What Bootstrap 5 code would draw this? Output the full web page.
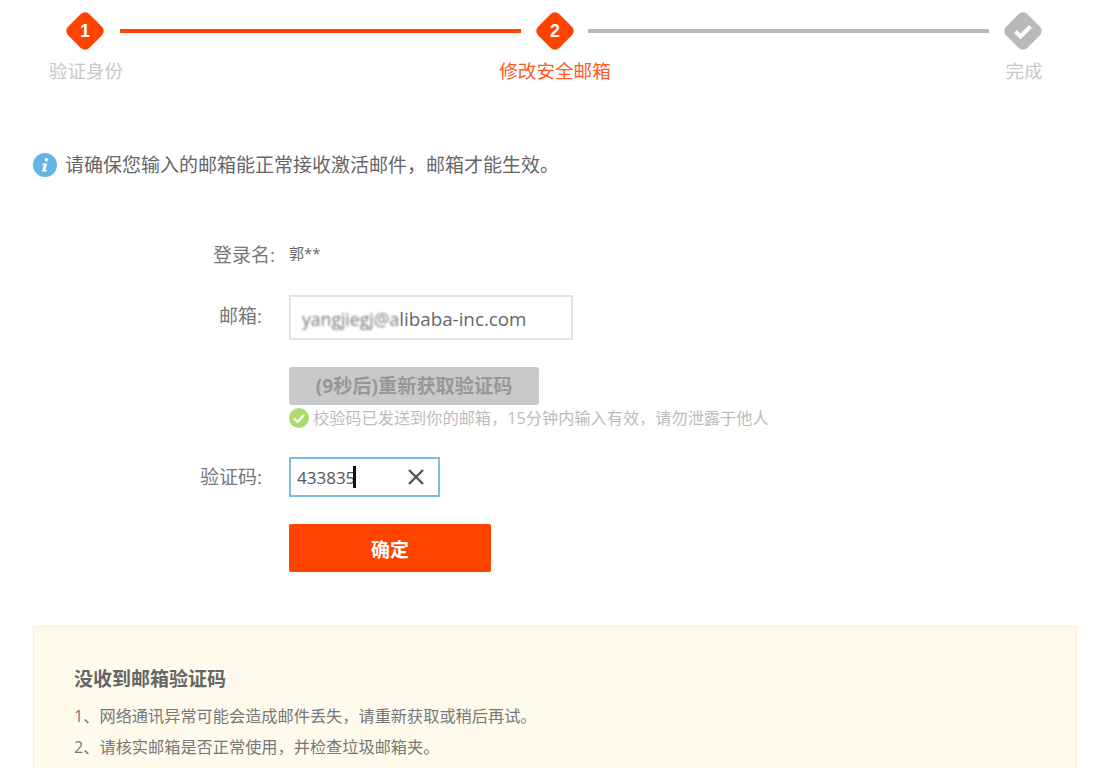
<!DOCTYPE html>
<html lang="zh-CN">
<head>
<meta charset="utf-8">
<title>修改安全邮箱</title>
<link rel="stylesheet" href="https://cdn.jsdelivr.net/npm/bootstrap@5.3.0/dist/css/bootstrap.min.css">
<style>
html,body{height:768px;overflow:hidden}
body{font-family:"Open Sans","Noto Sans CJK SC",sans-serif;color:#666;background:#fff}
.step-track{padding:10px 53px 0 65px;height:51px}
.step-icon{width:40px;height:40px;flex:none;display:block}
.step-icon text{font:700 18px "Liberation Sans","Noto Sans CJK SC",sans-serif;fill:#fff}
.step-line{height:4px;background:#ff4400;flex:none}
.step-line-one{width:401px;margin:0 14px 0 15px}
.step-line-two{width:401px;margin:0 14px 0 13px;background:#b9b9b9}
.step-labels{padding:7px 12px 0 26px;font-size:18.6px;line-height:26px;color:#c8c8c8}
.step-label{width:120px;text-align:center;white-space:nowrap}
.step-now{color:#ff5a1f}
.notice{margin:68px 0 0 33px;height:26px;font-size:19px;line-height:26px;color:#666;white-space:nowrap}
.notice svg{width:24px;height:24px;flex:none;margin-right:8px}
.form-zone{margin-top:64px}
.form-line{display:flex}
.form-name{width:262px;text-align:right;font-size:19px;line-height:26px;color:#777;flex:none;white-space:nowrap}
.form-value{margin-left:27px}
.name-line{height:26px}
.name-label{width:275px}
.name-val{margin-left:14px;font-size:15px;line-height:22px;color:#666}
.mail-line{margin-top:27px;height:45px;align-items:center}
.mail-name{margin-bottom:3px}
.mail-box{width:284px;height:45px;border:2px solid #e2e2e2;padding:4px 0 0 11px;font-size:18.8px;line-height:37px;color:#666;white-space:nowrap}
.mail-blur{filter:blur(1.1px);color:#777;font-size:17.6px}
.code-btn.btn{display:block;margin:27px 0 0 289px;width:250px;height:38px;background:#c8c9ca;border:0;border-radius:3px;color:#979797;font-weight:700;font-size:19.2px;line-height:38px;padding:0;opacity:1}
.hint{margin:0 0 0 289px;height:26px;font-size:16.2px;line-height:26px;color:#bcbcbc;white-space:nowrap}
.hint svg{width:20px;height:20px;flex:none;margin:3px 4px 0 0}
.code-line{margin-top:26px;height:40px;align-items:center}
.code-box{position:relative;width:151px;height:40px}
.code-box .form-control{height:40px;border:2px solid #7bbbe6;border-radius:0;padding:0 0 0 6px;font-size:17px;color:#555;box-shadow:none;background:#fff}
.caret-bar{position:absolute;left:64px;top:9px;width:3px;height:22px;background:#111}
.clear-icon{position:absolute;left:118px;top:11px;width:18px;height:18px}
.ok-btn.btn{display:block;margin:27px 0 0 289px;width:202px;height:48px;background:#ff4400;border:0;border-radius:2px;color:#fff;font-weight:700;font-size:19px;padding:5px 0 0}
.tips{margin:54px 19px 0 33px;height:142px;background:#fffbec;border:1px solid #f8efd2;border-bottom:0;padding:38px 0 0 40px}
.tips-title{font-size:19px;line-height:28px;font-weight:700;color:#666;margin:0 0 8px}
.tips-row{font-size:16.2px;line-height:31px;color:#777;margin:0;white-space:nowrap}
</style>
</head>
<body>
<div class="step-track d-flex align-items-center">
  <svg class="step-icon" viewBox="0 0 40 40"><rect x="5" y="5" width="30" height="30" rx="6" transform="rotate(45 20 20)" fill="#ff4400"/><text x="20" y="26" text-anchor="middle">1</text></svg>
  <div class="step-line step-line-one"></div>
  <svg class="step-icon" viewBox="0 0 40 40"><rect x="5" y="5" width="30" height="30" rx="6" transform="rotate(45 20 20)" fill="#ff4400"/><text x="20" y="26" text-anchor="middle">2</text></svg>
  <div class="step-line step-line-two"></div>
  <svg class="step-icon" viewBox="0 0 40 40"><rect x="5" y="5" width="30" height="30" rx="6" transform="rotate(45 20 20)" fill="#b9b9b9"/><path d="M12.5 20.5l5 5 10-10" fill="none" stroke="#fff" stroke-width="4"/></svg>
</div>
<div class="step-labels d-flex justify-content-between">
  <div class="step-label">验证身份</div>
  <div class="step-label step-now">修改安全邮箱</div>
  <div class="step-label">完成</div>
</div>

<div class="notice d-flex align-items-center">
  <svg viewBox="0 0 24 24"><circle cx="12" cy="12" r="12" fill="#62b5e5"/><circle cx="13.4" cy="6.8" r="1.8" fill="#fff"/><path d="M9.6 10.4h4.6l-1.8 6.6h1.6l-.4 1.6H9l1.8-6.6H9.2z" fill="#fff"/></svg>
  <span>请确保您输入的邮箱能正常接收激活邮件，邮箱才能生效。</span>
</div>

<div class="form-zone">
  <div class="form-line name-line">
    <div class="form-name name-label">登录名:</div>
    <div class="form-value name-val">郭**</div>
  </div>
  <div class="form-line mail-line">
    <div class="form-name mail-name">邮箱:</div>
    <div class="form-value mail-box"><span class="mail-blur">yangjiegj@a</span>libaba-inc.com</div>
  </div>
  <button class="btn code-btn" type="button">(9秒后)重新获取验证码</button>
  <div class="hint d-flex">
    <svg viewBox="0 0 20 20"><circle cx="10" cy="10" r="10" fill="#a9dc6c"/><path d="M5 10.5l3.6 3.4L15 7" fill="none" stroke="#fff" stroke-width="2.4"/></svg>
    <span>校验码已发送到你的邮箱，15分钟内输入有效，请勿泄露于他人</span>
  </div>
  <div class="form-line code-line">
    <div class="form-name">验证码:</div>
    <div class="form-value code-box">
      <input class="form-control" type="text" value="433835" aria-label="验证码">
      <span class="caret-bar"></span>
      <svg class="clear-icon" viewBox="0 0 18 18"><path d="M2 2l14 14M16 2L2 16" stroke="#555" stroke-width="2.4" fill="none"/></svg>
    </div>
  </div>
  <button class="btn ok-btn" type="button">确定</button>
</div>

<div class="tips">
  <h5 class="tips-title">没收到邮箱验证码</h5>
  <p class="tips-row">1、网络通讯异常可能会造成邮件丢失，请重新获取或稍后再试。</p>
  <p class="tips-row">2、请核实邮箱是否正常使用，并检查垃圾邮箱夹。</p>
</div>
<script src="https://cdn.jsdelivr.net/npm/bootstrap@5.3.0/dist/js/bootstrap.bundle.min.js"></script>
</body>
</html>
